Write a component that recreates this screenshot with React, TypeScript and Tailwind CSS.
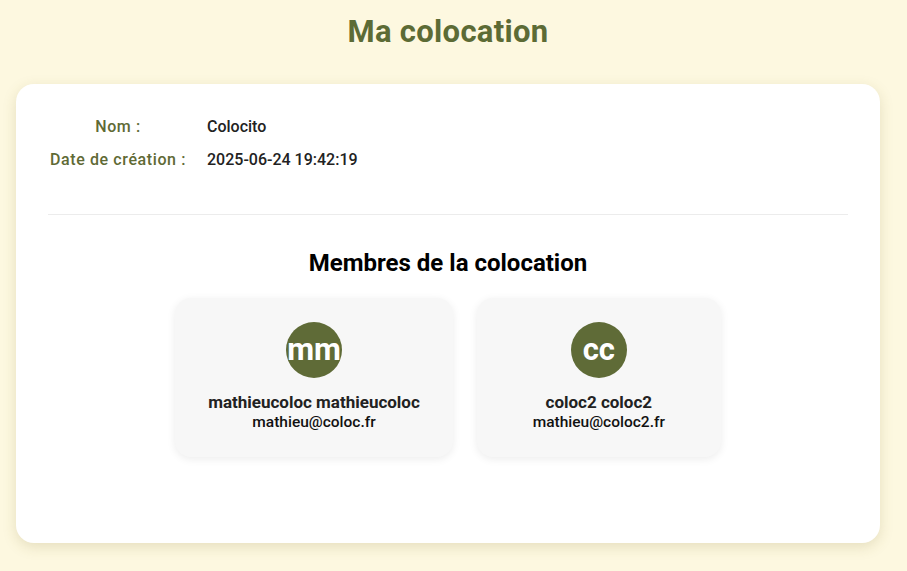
const MEMBERS = [
  { initials: "mm", name: "mathieucoloc mathieucoloc", email: "mathieu@coloc.fr" },
  { initials: "cc", name: "coloc2 coloc2", email: "mathieu@coloc2.fr" },
];

export default function App() {
  return (
    <div
      className="min-h-[571px] bg-[#fdf8e0]"
      style={{ fontFamily: "Roboto, 'Liberation Sans', sans-serif" }}
    >
      <div className="w-[896px] px-4 pt-[13px] pb-7">
        <h1 className="text-center text-[31px] leading-[38px] font-bold tracking-[0.3px] text-[#5c6b35]">
          Ma colocation
        </h1>

        <div className="mt-[33px] rounded-[18px] bg-white px-8 pt-[22px] pb-[86px] shadow-[0_4px_14px_rgba(120,110,40,0.18)]">
          {/* Infos */}
          <table className="border-separate border-spacing-y-[9px] text-[16px]">
            <tbody>
              <tr>
                <td className="w-[140px] p-0 text-center font-medium tracking-[0.6px] text-[#5f6a35]">
                  Nom :
                </td>
                <td className="pl-[19px] font-medium text-[#222]">Colocito</td>
              </tr>
              <tr>
                <td className="w-[140px] p-0 text-center font-medium tracking-[0.6px] text-[#5f6a35]">
                  Date de création :
                </td>
                <td className="pl-[19px] font-medium text-[#222]">2025-06-24 19:42:19</td>
              </tr>
            </tbody>
          </table>

          <div className="mt-[33px] border-t border-[#ececec]" />

          {/* Membres */}
          <h2 className="mt-[33px] text-center text-[24px] leading-[30px] font-bold text-black">
            Membres de la colocation
          </h2>
          <div className="mt-[20px] flex justify-center gap-6">
            {MEMBERS.map((m) => (
              <div
                key={m.email}
                className="flex min-w-[244px] flex-col items-center rounded-[16px] bg-[#f7f7f7] px-[33px] pt-[24px] pb-[25px] shadow-[0_2px_8px_rgba(0,0,0,0.08)]"
              >
                <div className="flex h-[56px] w-[56px] items-center justify-center overflow-hidden rounded-full bg-[#5f6b37] text-[31px] font-bold text-white">
                  {m.initials}
                </div>
                <div className="mt-[14px] text-[17px] leading-[20px] font-bold text-[#222]">
                  {m.name}
                </div>
                <div className="text-[15.5px] leading-[20px] font-medium text-[#111]">
                  {m.email}
                </div>
              </div>
            ))}
          </div>
        </div>
      </div>
    </div>
  );
}
